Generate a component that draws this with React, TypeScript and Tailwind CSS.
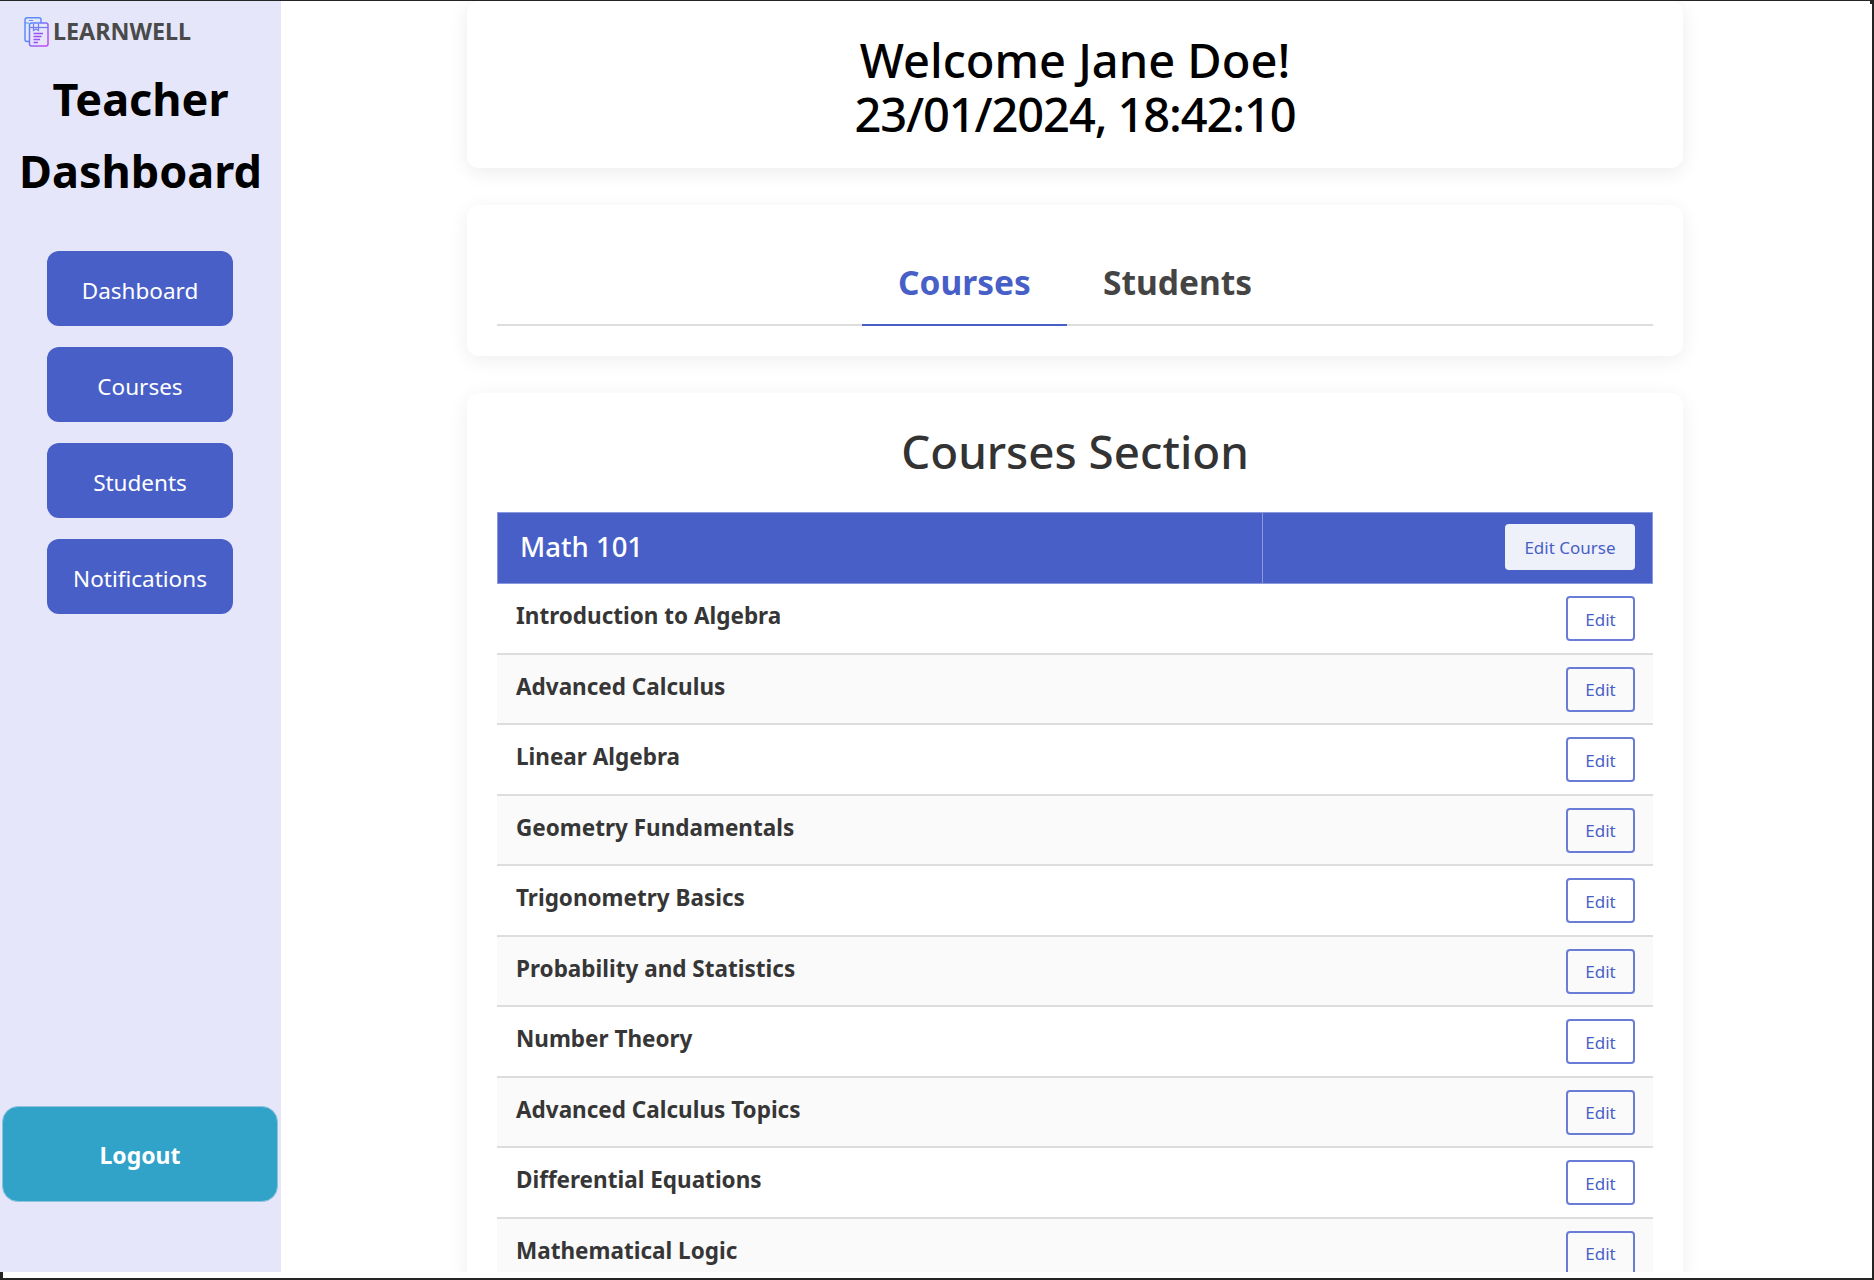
const lessons = [
  "Introduction to Algebra",
  "Advanced Calculus",
  "Linear Algebra",
  "Geometry Fundamentals",
  "Trigonometry Basics",
  "Probability and Statistics",
  "Number Theory",
  "Advanced Calculus Topics",
  "Differential Equations",
  "Mathematical Logic",
];

const navItems = ["Dashboard", "Courses", "Students", "Notifications"];

function LogoIcon() {
  return (
    <svg width="25" height="30" viewBox="0 0 25 30" fill="none" strokeWidth="1.500">
      <defs>
        <linearGradient id="logo-grad" x1="0" y1="0" x2="1" y2="1">
          <stop offset="0" stopColor="#4f8dfb" />
          <stop offset="1" stopColor="#c944fb" />
        </linearGradient>
      </defs>
      <path d="M5 24.500H3a2 2 0 0 1-2-2V2.800a2 2 0 0 1 2-2h12a2 2 0 0 1 2 2V6" stroke="#5a8cfb" />
      <path d="M1 6h4M5 3.500h4" stroke="#5a8cfb" strokeWidth="1.200" />
      <rect x="5.500" y="6" width="18.500" height="23" rx="2" stroke="url(#logo-grad)" />
      <path d="M5.500 10.500h18.500" stroke="#6f7cf6" strokeWidth="1.200" />
      <path d="M9.500 7v6.500l2.500-1.500 2.500 1.500V7" stroke="#6f7cf6" strokeWidth="1.200" />
      <path d="M9.500 16.500h9.500M9.500 19.500h8M9.500 22.500h6.500M9.500 25.500h4.500" stroke="#9a50f5" />
    </svg>
  );
}

export default function App() {
  return (
    <div className="relative h-[1280px] w-full overflow-hidden bg-[#242424] pt-px pr-0.5 pb-0.5 font-['Noto_Sans',sans-serif]">
      <div className="h-full bg-white">
        <div className="flex h-[1271px] overflow-hidden">
          {/* Sidebar */}
          <aside className="flex w-[281px] shrink-0 flex-col bg-[#e6e6fa]">
            <div className="flex h-[46px] items-center gap-1 pt-[15px] pl-6">
              <LogoIcon />
              <span className="text-[23.300px] font-bold text-[#4a4a4a]">LEARNWELL</span>
            </div>
            <h1 className="mt-4 text-center text-[45px] leading-[72px] font-bold text-black">
              Teacher Dashboard
            </h1>
            <nav className="mt-11 flex flex-col items-center gap-[21px] pr-px">
              {navItems.map((item) => (
                <button
                  key={item}
                  className="h-[75px] w-[186px] rounded-xl bg-[#485fc7] pt-1 text-[22.500px] text-white"
                >
                  {item}
                </button>
              ))}
            </nav>
            <button className="mt-auto mr-[3px] mb-[70px] ml-0.5 h-[96px] rounded-2xl border border-[#8fc4dc] bg-[#31a3c9] pt-[3px] text-[23px] font-bold text-white">
              Logout
            </button>
          </aside>

          {/* Main */}
          <main className="flex flex-1 flex-col gap-[37px] pl-[186px]">
            <section className="h-[167px] w-[1216px] shrink-0 rounded-xl bg-white pt-[32px] text-center text-[47px] leading-[54px] font-medium text-black shadow-[0_4px_20px_rgba(0,0,0,0.08)]">
              <div>Welcome Jane Doe!</div>
              <div className="tracking-[-1.100px]">23/01/2024, 18:42:10</div>
            </section>

            <section className="h-[151px] w-[1216px] shrink-0 rounded-xl bg-white px-[30px] pt-[30px] shadow-[0_4px_20px_rgba(0,0,0,0.07)]">
              <div className="flex h-[91px] justify-center border-b-2 border-[#dddddd]">
                <div className="-mb-0.5 flex h-[91px] w-[205px] items-center justify-center border-b-2 border-[#485fc7] pt-[5px] text-[33.500px] font-bold text-[#485fc7]">
                  Courses
                </div>
                <div className="flex h-[89px] w-[221px] items-center justify-center pt-[6px] text-[33.500px] font-bold text-[#444444]">
                  Students
                </div>
              </div>
            </section>

            <section className="w-[1216px] shrink-0 rounded-xl bg-white px-[30px] pt-[29px] shadow-[0_4px_20px_rgba(0,0,0,0.07)]">
              <h2 className="text-center text-[45.700px] leading-[58px] font-medium text-[#333333]">
                Courses Section
              </h2>
              <div className="mt-8">
                <div className="flex h-[72px] items-center border border-[#8b99dc] bg-[#485fc7]">
                  <div className="flex h-full w-[765px] items-center border-r border-[#8b99dc] pb-[3px] pl-[22px] text-[27.500px] font-medium text-white">
                    Math 101
                  </div>
                  <div className="flex flex-1 justify-end pr-[17px]">
                    <button className="mb-0.5 h-[46px] w-[130px] rounded bg-[#eef1fa] pt-0.5 text-[17px] text-[#485fc7]">
                      Edit Course
                    </button>
                  </div>
                </div>
                {lessons.map((lesson, i) => (
                  <div
                    key={lesson}
                    className={`flex h-[70.500px] justify-between border-b-2 border-[#dddddd] pr-[18px] pl-[19px] ${
                      i % 2 === 1 ? "bg-[#fafafa]" : "bg-white"
                    }`}
                  >
                    <span className="pt-[15px] text-[22.500px] font-bold text-[#363636]">{lesson}</span>
                    <button className="mt-[12px] h-[45px] w-[69px] rounded border-2 border-[#6a7dd6] pt-0.5 text-[17px] text-[#485fc7]">
                      Edit
                    </button>
                  </div>
                ))}
              </div>
            </section>
          </main>
        </div>
      </div>
      {/* window corner notches */}
      <div className="absolute bottom-0.5 left-0 h-[6px] w-[3px] bg-[#242424]" />
      <div className="absolute top-px right-0.5 h-[3px] w-[2px] bg-[#242424]" />
    </div>
  );
}
